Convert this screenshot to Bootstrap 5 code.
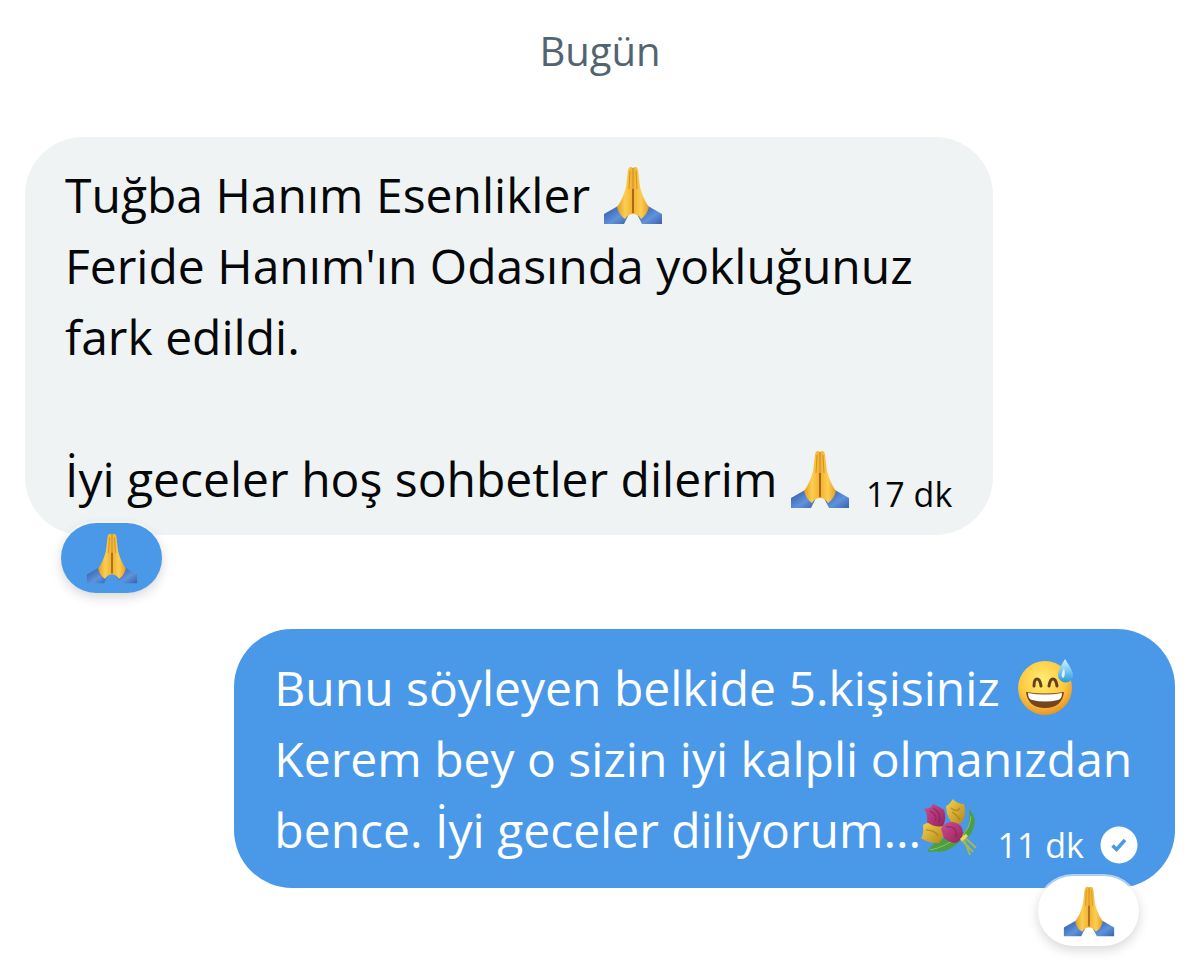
<!DOCTYPE html>
<html lang="tr">
<head>
<meta charset="utf-8">
<meta name="viewport" content="width=device-width, initial-scale=1">
<title>Mesajlar</title>
<link href="https://cdn.jsdelivr.net/npm/bootstrap@5.3.0/dist/css/bootstrap.min.css" rel="stylesheet">
<style>
  body { font-family: "Open Sans", "Noto Sans", sans-serif; background: #fff; color: #050708; }
  .thread { padding: 16px 25px 76px; }
  .day { font-size: 40px; line-height: 70px; color: #536471; margin-bottom: 51px; }
  .bubble { border-radius: 58px; font-size: 48px; line-height: 71px; padding: 22px 41px 21px 40px; }
  .incoming { width: 84.2%; background: #eff3f4; }
  .outgoing { width: 81.8%; background: #4a99e9; color: #fff; margin-top: 94px; padding: 23px 37px 23px 40px; }
  .stamp { font-size: 34px; line-height: 40px; }
  .reaction { position: absolute; top: calc(100% - 12px); width: 101px; height: 70px; border-radius: 35px; box-shadow: 0 4px 12px rgba(0,0,0,.16), 0 0 0 2px rgba(255,255,255,.6); }
  .incoming .reaction { left: 36px; background: #4a99e9; }
  .outgoing .reaction { right: 36px; background: #fff; }
  .emoji { width: 60px; height: 60px; vertical-align: -12px; }
  .outgoing .emoji { vertical-align: -10px; }
  .reaction .emoji { width: 52px; height: 52px; }
  .seen { width: 38px; height: 38px; }
</style>
</head>
<body>
<svg width="0" height="0" class="position-absolute" aria-hidden="true">
  <defs>
    <linearGradient id="skin" x1="0" x2="1" y1="0" y2="0"><stop offset="0" stop-color="#e39a24"/><stop offset=".5" stop-color="#fdce50"/><stop offset="1" stop-color="#f0b030"/></linearGradient>
    <linearGradient id="skinRight" x1="1" x2="0" y1="0" y2="0"><stop offset="0" stop-color="#e39a24"/><stop offset=".5" stop-color="#fdce50"/><stop offset="1" stop-color="#f0b030"/></linearGradient>
    <linearGradient id="cuff" x1="0" x2="1" y1="0" y2="1"><stop offset="0" stop-color="#2f549f"/><stop offset=".6" stop-color="#5f93dc"/><stop offset="1" stop-color="#3a62aa"/></linearGradient>
    <radialGradient id="face" cx=".45" cy=".35" r=".65"><stop offset="0" stop-color="#ffee74"/><stop offset=".65" stop-color="#fdc93f"/><stop offset="1" stop-color="#e99528"/></radialGradient>
    <linearGradient id="drop" x1="0" x2="0" y1="0" y2="1"><stop offset="0" stop-color="#d5f3ff"/><stop offset="1" stop-color="#249be0"/></linearGradient>
    <linearGradient id="pink" x1="0" x2="1" y1="0" y2="1"><stop offset="0" stop-color="#cf4f94"/><stop offset="1" stop-color="#96205c"/></linearGradient>
    <linearGradient id="gold" x1="0" x2="1" y1="0" y2="1"><stop offset="0" stop-color="#f5d44c"/><stop offset="1" stop-color="#b5861b"/></linearGradient>
    <symbol id="pray" viewBox="0 0 60 60">
      <path d="M1 49 15 41 26 49 21 59H1Z" fill="url(#cuff)"/>
      <path d="M59 49 45 41 34 49 39 59H59Z" fill="url(#cuff)"/>
      <path d="M30 3Q26 0 25 5L23 22Q20 34 14 42Q16 50 22 54Q25 49 30 49Z" fill="url(#skin)"/>
      <path d="M30 3Q34 0 35 5L37 22Q40 34 46 42Q44 50 38 54Q35 49 30 49Z" fill="url(#skinRight)"/>
      <path d="M30 3V46M27 6 26 24M33 6 34 24" stroke="#b97618" stroke-width="1" fill="none" opacity=".6"/>
      <path d="M30 24V48" stroke="#985519" stroke-width="1.5"/>
    </symbol>
    <symbol id="sweat" viewBox="0 0 60 60">
      <circle cx="29" cy="32" r="27" fill="url(#face)"/>
      <path d="M18 30Q18 23 21 23T25 30M33 30Q34 23 37 23T41 30" fill="none" stroke="#67401b" stroke-width="3" stroke-linecap="round"/>
      <path d="M10 36Q29 39 48 36Q46 52 29 52T10 36Z" fill="#75431e"/>
      <path d="M12 37Q29 40 46 37Q46 43 42 44Q29 47 16 44Q12 43 12 37Z" fill="#fff"/>
      <path d="M49 3Q57 15 57 19A7 7 0 0 1 42 19Q42 14 49 3Z" fill="url(#drop)"/>
      <path d="M48 12Q44 20 47 22Q50 20 48 12Z" fill="#fff" opacity=".8"/>
    </symbol>
    <symbol id="bouquet" viewBox="0 0 60 60">
      <path d="M38 36Q51 34 48 11Q57 20 52 31Q50 40 40 42ZM34 38Q15 39 6 54Q28 54 39 41M26 44Q15 48 17 54Q30 54 42 40" fill="#4c9d43"/>
      <path d="M39 35 55 50M37 38 52 54M41 36 49 57" stroke="#a3b94b" stroke-width="2" fill="none"/>
      <path d="M9 52Q24 49 35 40M41 38Q49 30 50 18" stroke="#83c956" fill="none"/>
      <path d="M2 27Q6 24 12 25L22 27Q25 39 18 45Q8 46 0 40Q3 37 2 27Z" fill="url(#gold)"/>
      <path d="M25 8Q28 7 32 1Q36 6 43 6Q45 13 43 20Q41 27 34 26Q26 23 25 8Z" fill="url(#gold)"/>
      <path d="M3 10Q9 12 12 6Q17 8 23 12Q26 20 22 28Q14 30 6 24Q7 17 3 10Z" fill="url(#pink)"/>
      <path d="M20 31Q24 23 32 24Q42 26 42 35Q41 43 34 45Q27 44 23 40Z" fill="url(#pink)"/>
      <path d="M9 13Q17 17 14 23M12 10Q21 15 18 24M25 29Q36 27 35 39" fill="none" stroke="#79204c" stroke-width="1.500" opacity=".5"/>
      <path d="M30 10Q36 15 39 10M31 14Q37 18 39 22M5 32Q14 32 17 38" fill="none" stroke="#9a6b13" stroke-width="1.500" opacity=".5"/>
      <path d="M40 42 46 37" stroke="#eddd54" stroke-width="3"/>
    </symbol>
  </defs>
</svg>
<main class="thread container-fluid">
  <div class="day text-center">Bugün</div>
  <article class="bubble incoming position-relative">
    <div class="text-nowrap">Tuğba Hanım Esenlikler <svg class="emoji" role="img" aria-label="Dua eden eller"><use href="#pray"/></svg></div>
    <div>Feride Hanım'ın Odasında yokluğunuz<br>fark edildi.<br><br></div>
    <div class="d-flex justify-content-between align-items-end text-nowrap">
      <span>İyi geceler hoş sohbetler dilerim <svg class="emoji" role="img" aria-label="Dua eden eller"><use href="#pray"/></svg></span>
      <time class="stamp">17 dk</time>
    </div>
    <div class="reaction d-flex align-items-center justify-content-center"><svg class="emoji" role="img" aria-label="Dua eden eller"><use href="#pray"/></svg></div>
  </article>
  <article class="bubble outgoing position-relative ms-auto">
    <div class="text-nowrap">Bunu söyleyen belkide 5.kişisiniz <svg class="emoji ms-1" role="img" aria-label="Terleyen gülen yüz"><use href="#sweat"/></svg></div>
    <div class="text-nowrap">Kerem bey o sizin iyi kalpli olmanızdan</div>
    <div class="d-flex justify-content-between align-items-end text-nowrap">
      <span>bence. İyi geceler diliyorum...<svg class="emoji" role="img" aria-label="Çiçek buketi"><use href="#bouquet"/></svg></span>
      <span class="d-flex align-items-center gap-3"><time class="stamp">11 dk</time>
      <svg class="seen" viewBox="0 0 38 38" role="img" aria-label="Görüldü"><circle cx="19" cy="19" r="18.500" fill="#fff"/><path d="m12.500 19.500 4 4L25 14" fill="none" stroke="#4a99e9" stroke-width="3.500"/></svg></span>
    </div>
    <div class="reaction d-flex align-items-center justify-content-center"><svg class="emoji" role="img" aria-label="Dua eden eller"><use href="#pray"/></svg></div>
  </article>
</main>
<script src="https://cdn.jsdelivr.net/npm/bootstrap@5.3.0/dist/js/bootstrap.bundle.min.js"></script>
</body>
</html>
